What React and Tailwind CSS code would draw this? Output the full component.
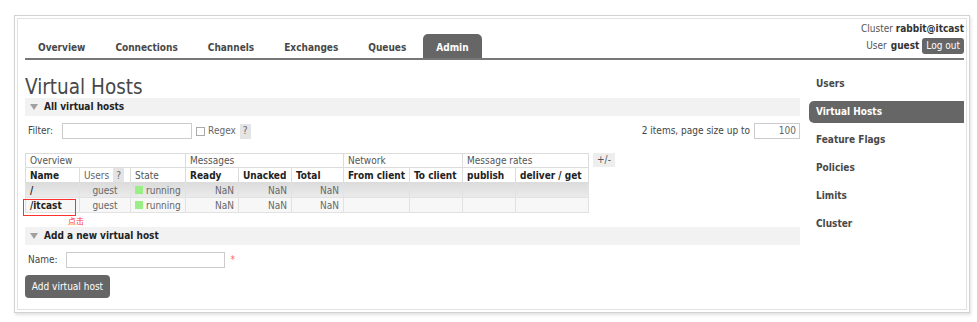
const F = "font-['DejaVu_Sans_Condensed','DejaVu_Sans',sans-serif]";

function Tri() {
  return (
    <svg width="8" height="6" viewBox="0 0 8 6" className="mr-[6px]">
      <path d="M0 0 L8 0 L4 6 Z" fill="#a0a0a0" />
    </svg>
  );
}

function Bar({ children }) {
  return (
    <div className="h-[18px] bg-[#f2f2f2] flex items-center pl-[5px] font-bold text-[#222]">
      <Tri />
      {children}
    </div>
  );
}

const tabs = ["Overview", "Connections", "Channels", "Exchanges", "Queues", "Admin"];
const side = ["Users", "Virtual Hosts", "Feature Flags", "Policies", "Limits", "Cluster"];

export default function App() {
  const th = "border border-[#dcdcdc] px-[4px] leading-[13px] text-left";
  const td = "border border-[#e2e2e2] px-[4px] h-[15px] leading-[13px]";
  return (
    <div className={`w-[977px] h-[322px] bg-white pt-[15px] pl-[14px] ${F} text-[10px] leading-[14px] text-[#444]`}>
      <div className="w-[956px] h-[298px] border border-[#d2d2d2] p-[2px] shadow-[1px_2px_3px_rgba(0,0,0,0.12)]">
        <div className="h-full border border-[#e2e2e2] pl-[7px] pr-[2px]">
          {/* header */}
          <div className="h-[41px] flex justify-between border-b-2 border-[#777]">
            <div className="flex items-end gap-[4px]">
              {tabs.map((t) => (
                <div
                  key={t}
                  className={`h-[24px] px-[13px] pt-[3px] flex items-center font-bold ${
                    t === "Admin" ? "bg-[#666] text-white rounded-t-[5px]" : "text-[#484848]"
                  }`}
                >
                  {t}
                </div>
              ))}
            </div>
            <div className="flex flex-col items-end">
              <div className="mt-[3px] leading-[14px] text-[#555]">
                Cluster <b className="text-[#333]">rabbit@itcast</b>
              </div>
              <div className="mt-[2px] h-[16px] flex items-center text-[#555]">
                User <b className="ml-[4px] text-[#333]">guest</b>
                <span className="ml-[3px] h-[16px] px-[4px] flex items-center bg-[#666] text-white rounded-[3px]">
                  Log out
                </span>
              </div>
            </div>
          </div>

          {/* body */}
          <div className="flex">
            <div className="w-[775px]">
              <h1 className="mt-[16px] h-[22px] leading-[22px] text-[20.5px] font-normal text-[#484848]">
                Virtual Hosts
              </h1>
              <Bar>All virtual hosts</Bar>

              <div className="mt-[7px] h-[16px] flex items-center justify-between">
                <div className="flex items-center pl-[3px]">
                  <span>Filter:</span>
                  <span className="ml-[9px] w-[130px] h-[16px] border border-[#ccc] bg-white" />
                  <span className="ml-[4px] w-[9px] h-[9px] border border-[#aaa] bg-white" />
                  <span className="ml-[3px] text-[#666]">Regex</span>
                  <span className="ml-[4px] h-[15px] px-[3px] bg-[#e4e4e4] text-[#666] flex items-center">?</span>
                </div>
                <div className="flex items-center">
                  <span>2 items, page size up to</span>
                  <span className="ml-[4px] w-[46px] h-[16px] border border-[#ccc] bg-white text-right pr-[3px] text-[#666]">
                    100
                  </span>
                </div>
              </div>

              <div className="mt-[14px] flex items-start gap-[4px]">
                <table className="table-fixed w-[563px] border-collapse">
                  <colgroup>
                    <col className="w-[54px]" />
                    <col className="w-[51px]" />
                    <col className="w-[55px]" />
                    <col className="w-[53px]" />
                    <col className="w-[53px]" />
                    <col className="w-[52px]" />
                    <col className="w-[66px]" />
                    <col className="w-[53px]" />
                    <col className="w-[53px]" />
                    <col className="w-[73px]" />
                  </colgroup>
                  <thead>
                    <tr className="text-[#555]">
                      <th colSpan={3} className={`${th} h-[14px] font-normal`}>Overview</th>
                      <th colSpan={3} className={`${th} h-[14px] font-normal`}>Messages</th>
                      <th colSpan={2} className={`${th} h-[14px] font-normal`}>Network</th>
                      <th colSpan={2} className={`${th} h-[14px] font-normal`}>Message rates</th>
                    </tr>
                    <tr className="text-[#222]">
                      <th className={`${th} h-[15px] font-bold`}>Name</th>
                      <th className={`${th} h-[15px] font-normal text-[#666]`}>
                        <div className="flex items-center h-[14px]">
                          Users
                          <span className="ml-[4px] h-[14px] px-[3px] bg-[#e4e4e4] flex items-center">?</span>
                        </div>
                      </th>
                      <th className={`${th} h-[15px] font-normal text-[#555]`}>State</th>
                      <th className={`${th} h-[15px] font-bold`}>Ready</th>
                      <th className={`${th} h-[15px] font-bold`}>Unacked</th>
                      <th className={`${th} h-[15px] font-bold`}>Total</th>
                      <th className={`${th} h-[15px] font-bold`}>From client</th>
                      <th className={`${th} h-[15px] font-bold`}>To client</th>
                      <th className={`${th} h-[15px] font-bold`}>publish</th>
                      <th className={`${th} h-[15px] font-bold`}>deliver / get</th>
                    </tr>
                  </thead>
                  <tbody className="text-[#666]">
                    {["/", "/itcast"].map((n, i) => (
                      <tr
                        key={n}
                        className={i === 0 ? "bg-gradient-to-b from-[#dcdcdc] to-[#ececec]" : "bg-[#f7f7f7]"}
                      >
                        <td className={`${td} relative font-bold text-[#222]`}>
                          {n}
                          {i === 1 && (
                            <span className="absolute left-[-3px] top-[1px] w-[53px] h-[17px] border border-[#ff3030]" />
                          )}
                        </td>
                        <td className={`${td} text-center`}>guest</td>
                        <td className={td}>
                          <div className="flex items-center">
                            <span className="w-[8px] h-[8px] bg-[#99ee88] mr-[3px]" />
                            running
                          </div>
                        </td>
                        <td className={`${td} text-right`}>NaN</td>
                        <td className={`${td} text-right`}>NaN</td>
                        <td className={`${td} text-right`}>NaN</td>
                        <td className={td}></td>
                        <td className={td}></td>
                        <td className={td}></td>
                        <td className={td}></td>
                      </tr>
                    ))}
                  </tbody>
                </table>
                <span className="h-[14px] px-[4px] bg-[#eee] text-[#555] flex items-center">+/-</span>
              </div>

              <div className="h-[14px] pl-[43px] pt-[3px] text-[8px] leading-[10px] text-[#ff3030] font-['Noto_Sans_CJK_SC',sans-serif]">
                点击
              </div>

              <Bar>Add a new virtual host</Bar>

              <div className="mt-[7px] h-[16px] flex items-center pl-[3px]">
                <span>Name:</span>
                <span className="ml-[8px] w-[159px] h-[16px] border border-[#ccc] bg-white" />
                <span className="ml-[6px] text-[#f66]">*</span>
              </div>

              <div className="mt-[7px] w-[85px] h-[23px] bg-[#666] text-white rounded-[4px] flex items-center justify-center">
                Add virtual host
              </div>
            </div>

            <div className="ml-[9px] flex-1 mt-[13px]">
              {side.map((s) => (
                <div
                  key={s}
                  className={`h-[22px] mb-[6px] pl-[7px] flex items-center font-bold ${
                    s === "Virtual Hosts" ? "bg-[#666] text-white rounded-l-[5px]" : "text-[#484848]"
                  }`}
                >
                  {s}
                </div>
              ))}
            </div>
          </div>
        </div>
      </div>
    </div>
  );
}
